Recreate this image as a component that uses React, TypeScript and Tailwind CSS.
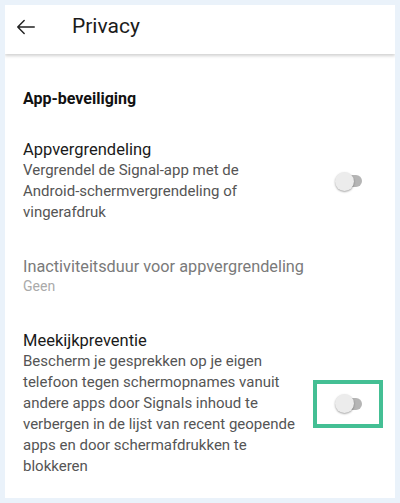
import React from "react";

function Toggle() {
  return (
    <div className="relative w-[27px] h-[20px] flex items-center">
      <div className="absolute left-[7px] w-[20px] h-[12px] rounded-full bg-[#b5b5b5]" />
      <div className="absolute left-0 w-[19px] h-[19px] rounded-full bg-[#ececec] shadow-[0_1px_2px_rgba(0,0,0,0.35)]" />
    </div>
  );
}

export default function App() {
  return (
    <div
      className="w-[400px] h-[503px] bg-[#eaf2fa] p-[5px]"
      style={{ fontFamily: "Roboto, 'Liberation Sans', sans-serif" }}
    >
      <div className="w-[390px] h-[493px] bg-white flex flex-col overflow-hidden">
        <div className="h-[49px] flex items-center pb-[6px] shrink-0 shadow-[0_2px_3px_rgba(0,0,0,0.18)] relative z-10">
          <svg width="22" height="22" viewBox="0 0 24 24" className="ml-[10px]" fill="none" stroke="#222" strokeWidth="1.6" strokeLinecap="round" strokeLinejoin="round">
            <path d="M21 12H3M10 5l-7 7 7 7" />
          </svg>
          <div className="ml-[35px] text-[21px] text-[#1b1b1b] leading-none">Privacy</div>
        </div>

        <div className="pl-[18px] pr-[12px] pt-[35px]">
          <div className="text-[16px] font-bold text-[#111] leading-[20px]">App-beveiliging</div>

          <div className="mt-[30px] flex items-center">
            <div className="flex-1">
              <div className="text-[16.5px] text-[#1a1a1a] leading-[21px]">Appvergrendeling</div>
              <div className="text-[15px] text-[#555] leading-[21px] w-[250px]">
                Vergrendel de Signal-app met de Android-schermvergrendeling of vingerafdruk
              </div>
            </div>
            <div className="w-[70px] flex justify-center">
              <Toggle />
            </div>
          </div>

          <div className="mt-[33px]">
            <div className="text-[16.3px] text-[#7a7a7a] leading-[21px]">Inactiviteitsduur voor appvergrendeling</div>
            <div className="text-[14px] text-[#aaa] leading-[19px]">Geen</div>
          </div>

          <div className="mt-[34px] flex items-center">
            <div className="flex-1">
              <div className="text-[16.5px] text-[#1a1a1a] leading-[21px]">Meekijkpreventie</div>
              <div className="text-[15px] text-[#555] leading-[21px] w-[280px]">
                Bescherm je gesprekken op je eigen telefoon tegen schermopnames vanuit andere apps door Signals inhoud te verbergen in de lijst van recent geopende apps en door schermafdrukken te blokkeren
              </div>
            </div>
            <div className="w-[70px] h-[48px] border-[4px] border-[#44bf94] flex items-center justify-center">
              <Toggle />
            </div>
          </div>
        </div>
      </div>
    </div>
  );
}
